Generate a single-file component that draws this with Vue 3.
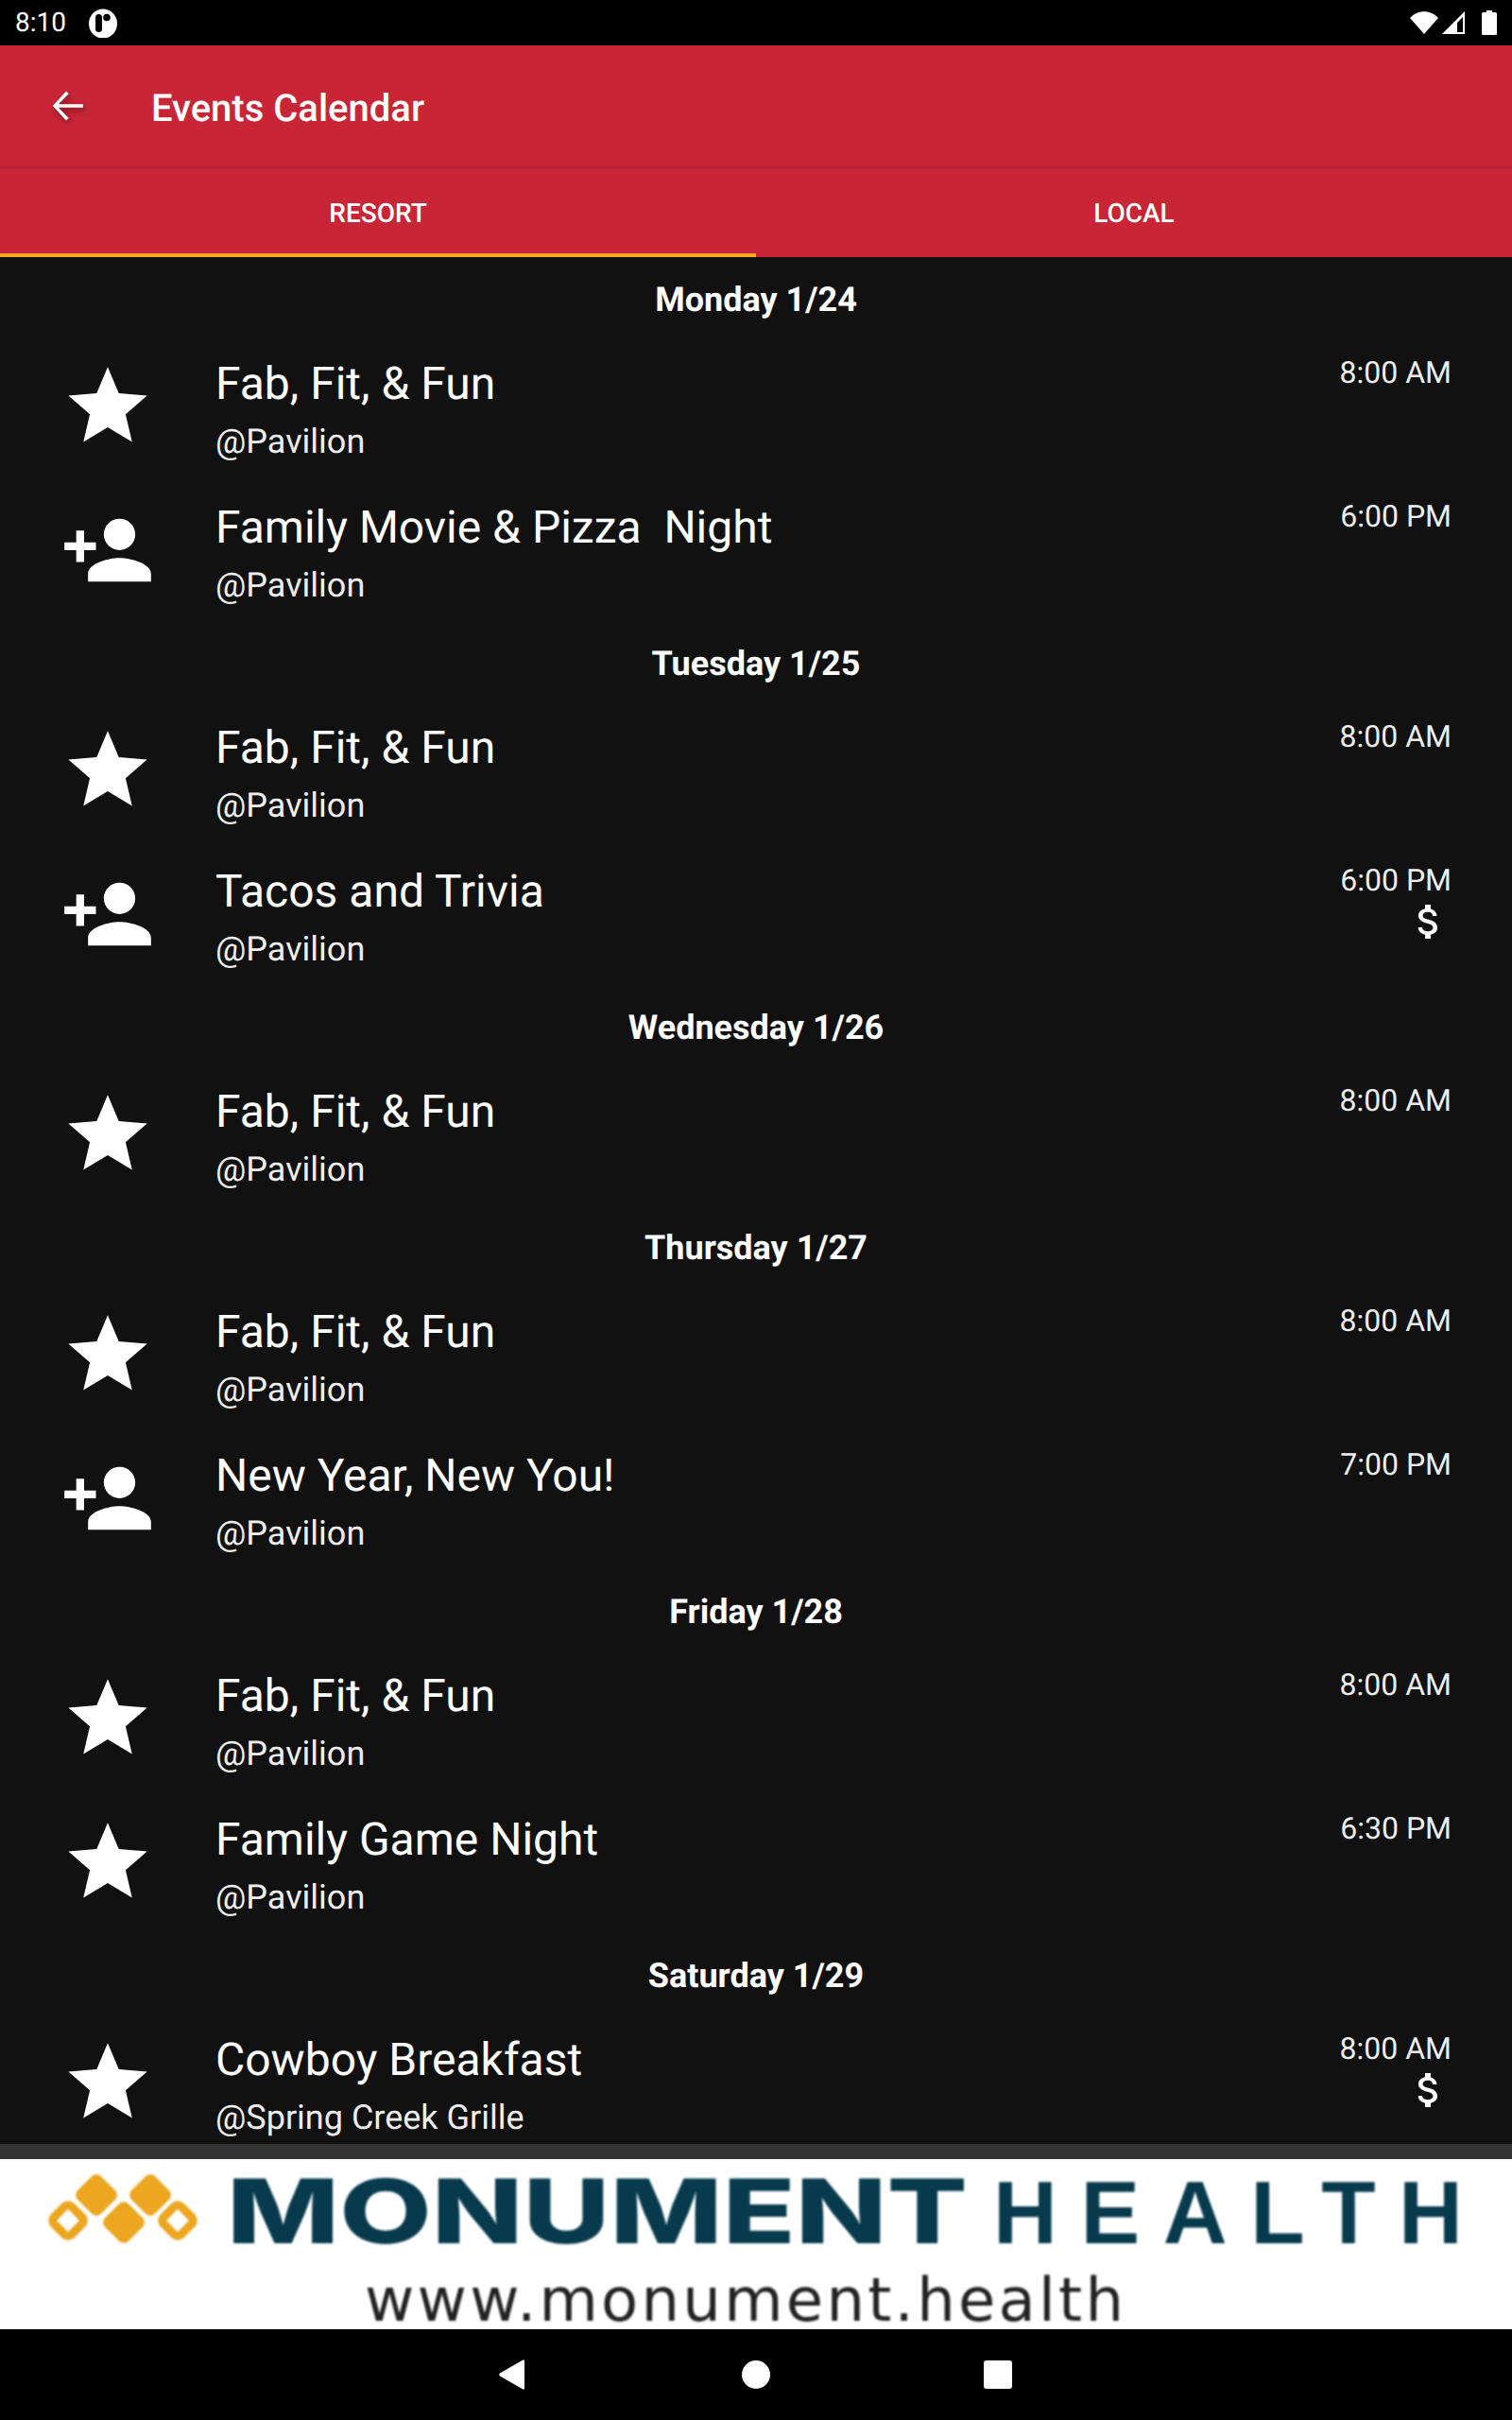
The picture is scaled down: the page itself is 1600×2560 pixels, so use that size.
<script setup>
const days = [
  { label: 'Monday 1/24', events: [
    { icon: 'star', title: 'Fab, Fit, & Fun', place: '@Pavilion', time: '8:00 AM' },
    { icon: 'add', title: 'Family Movie & Pizza  Night', place: '@Pavilion', time: '6:00 PM' }
  ]},
  { label: 'Tuesday 1/25', events: [
    { icon: 'star', title: 'Fab, Fit, & Fun', place: '@Pavilion', time: '8:00 AM' },
    { icon: 'add', title: 'Tacos and Trivia', place: '@Pavilion', time: '6:00 PM', paid: true }
  ]},
  { label: 'Wednesday 1/26', events: [
    { icon: 'star', title: 'Fab, Fit, & Fun', place: '@Pavilion', time: '8:00 AM' }
  ]},
  { label: 'Thursday 1/27', events: [
    { icon: 'star', title: 'Fab, Fit, & Fun', place: '@Pavilion', time: '8:00 AM' },
    { icon: 'add', title: 'New Year, New You!', place: '@Pavilion', time: '7:00 PM' }
  ]},
  { label: 'Friday 1/28', events: [
    { icon: 'star', title: 'Fab, Fit, & Fun', place: '@Pavilion', time: '8:00 AM' },
    { icon: 'star', title: 'Family Game Night', place: '@Pavilion', time: '6:30 PM' }
  ]},
  { label: 'Saturday 1/29', events: [
    { icon: 'star', title: 'Cowboy Breakfast', place: '@Spring Creek Grille', time: '8:00 AM', paid: true }
  ]}
]
</script>

<template>
  <div class="screen">
    <div class="status">
      <div class="status-left">
        <span class="clock">8:10</span>
        <svg class="note" width="32" height="32" viewBox="0 0 32 32">
          <ellipse cx="16" cy="17" rx="15" ry="15.5" fill="#fff"/>
          <rect x="8" y="7" width="7" height="19" rx="3.5" fill="#000"/>
          <circle cx="20" cy="10.5" r="3.8" fill="#000"/>
        </svg>
      </div>
      <div class="status-right">
        <svg width="30" height="26" viewBox="0 0 30 26"><path d="M15 25 L0 8 C8 -1 22 -1 30 8 Z" fill="#fff"/></svg>
        <svg width="26" height="26" viewBox="0 0 26 26"><path d="M1 25 L25 1 V25 Z" fill="#fff"/><path d="M17 13 L23 7 V23 H17 Z" fill="#000"/></svg>
        <svg width="16" height="26" viewBox="0 0 16 26"><path d="M5 0 H11 V2 H14.5 Q16 2 16 3.5 V24.5 Q16 26 14.5 26 H1.5 Q0 26 0 24.5 V3.5 Q0 2 1.5 2 H5 Z" fill="#fff"/></svg>
      </div>
    </div>

    <header class="toolbar">
      <svg class="back" width="48" height="48" viewBox="0 0 24 24"><path d="M20 11.1H6.9l5.4-5.5L11 4.3 3.9 12l7.1 7.7 1.3-1.3-5.4-5.5H20z" fill="#fff"/></svg>
      <h1 class="toolbar-title">Events Calendar</h1>
    </header>

    <nav class="tabs">
      <div class="tab active">RESORT</div>
      <div class="tab">LOCAL</div>
    </nav>

    <main class="list">
      <section v-for="day in days" :key="day.label">
        <h2 class="day">{{ day.label }}</h2>
        <div v-for="(ev, i) in day.events" :key="i" class="row">
          <div class="row-icon">
            <svg v-if="ev.icon === 'star'" width="100" height="100" viewBox="0 0 24 24"><path d="M12 17.27L18.18 21l-1.64-7.03L22 9.24l-7.19-.61L12 2 9.19 8.63 2 9.24l5.46 4.73L5.82 21z" fill="#fff"/></svg>
            <svg v-else width="100" height="100" viewBox="0 0 24 24"><path d="M15 12c2.21 0 4-1.79 4-4s-1.79-4-4-4-4 1.79-4 4 1.79 4 4 4zm-9-2V7H4v3H1v2h3v3h2v-3h3v-2H6zm9 4c-2.67 0-8 1.34-8 4v2h16v-2c0-2.66-5.33-4-8-4z" fill="#fff"/></svg>
          </div>
          <div class="row-text">
            <div class="title">{{ ev.title }}</div>
            <div class="place">{{ ev.place }}</div>
          </div>
          <div class="row-meta">
            <div class="time">{{ ev.time }}</div>
            <svg v-if="ev.paid" class="money" width="48" height="48" viewBox="0 0 24 24"><path d="M11.8 10.9c-2.27-.59-3-1.2-3-2.15 0-1.09 1.01-1.85 2.7-1.85 1.78 0 2.44.85 2.5 2.1h2.21c-.07-1.72-1.12-3.3-3.21-3.81V3h-3v2.16c-1.94.42-3.5 1.68-3.5 3.61 0 2.31 1.91 3.46 4.7 4.13 2.5.6 3 1.48 3 2.41 0 .69-.49 1.79-2.7 1.79-2.06 0-2.87-.92-2.98-2.1h-2.2c.12 2.19 1.76 3.42 3.68 3.83V21h3v-2.15c1.95-.37 3.5-1.5 3.5-3.55 0-2.84-2.43-3.81-4.7-4.4z" fill="#fff"/></svg>
          </div>
        </div>
      </section>
    </main>

    <div class="ad-gap"></div>
    <div class="ad">
      <svg class="ad-art" width="1600" height="180" viewBox="0 0 1600 180">
        <g fill="#eca620">
          <rect x="84.5" y="20.5" width="35" height="35" rx="7" transform="rotate(45 102 38)"/>
          <rect x="141.5" y="20.5" width="35" height="35" rx="7" transform="rotate(45 159 38)"/>
          <rect x="113.5" y="49.5" width="35" height="35" rx="7" transform="rotate(45 131 67)"/>
        </g>
        <g fill="none" stroke="#eca620" stroke-width="9">
          <rect x="59" y="52" width="26" height="26" rx="5" transform="rotate(45 72 65)"/>
          <rect x="175" y="52" width="26" height="26" rx="5" transform="rotate(45 188 65)"/>
        </g>
        <text class="ad-brand" x="240" y="89" textLength="784" lengthAdjust="spacingAndGlyphs">MONUMENT</text>
        <text class="ad-health" x="1051" y="89" textLength="497" lengthAdjust="spacing">HEALTH</text>
        <text class="ad-url" x="386" y="171" textLength="803" lengthAdjust="spacing">www.monument.health</text>
      </svg>
    </div>

    <footer class="navbar">
      <svg class="nav-back" width="27" height="32" viewBox="0 0 27 32"><path d="M27 2 V30 Q27 33 24.5 31 L1 17.5 Q-0.5 16 1 14.5 L24.5 1 Q27 -1 27 2 Z" fill="#fff"/></svg>
      <svg class="nav-home" width="30" height="30" viewBox="0 0 30 30"><circle cx="15" cy="15" r="15" fill="#fff"/></svg>
      <svg class="nav-recent" width="30" height="30" viewBox="0 0 30 30"><rect width="30" height="30" rx="3" fill="#fff"/></svg>
    </footer>
  </div>
</template>

<style>
html, body { background: #000; }
</style>

<style scoped>
.screen {
  width: 1600px;
  height: 2560px;
  display: flex;
  flex-direction: column;
  font-family: Roboto, "Liberation Sans", sans-serif;
  color: #fff;
  background: #111;
  text-rendering: geometricPrecision;
}
.status {
  height: 48px;
  flex: none;
  background: #000;
  display: flex;
  justify-content: space-between;
  align-items: center;
  padding: 0 16px;
}
.status-left { display: flex; align-items: center; gap: 23px; }
.clock { font-size: 28px; line-height: 48px; }
.status-right { display: flex; align-items: center; gap: 3px; }
.status-right svg:last-child { margin-left: 14px; }
.toolbar {
  height: 128px;
  flex: none;
  background: #c82637;
  display: flex;
  align-items: center;
  padding-left: 48px;
  box-sizing: border-box;
}
.back { filter: drop-shadow(2px 3px 3px rgba(0, 0, 0, 0.45)); margin-right: 64px; }
.toolbar-title { margin: 6px 0 0; font-size: 40px; font-weight: 500; line-height: 48px; }
.tabs {
  height: 96px;
  flex: none;
  background: #c82637;
  display: flex;
  box-shadow: inset 0 4px 4px -3px rgba(0, 0, 0, 0.2);
}
.tab {
  flex: 1;
  box-sizing: border-box;
  text-align: center;
  font-size: 28px;
  font-weight: 500;
  line-height: 100px;
}
.tab.active { border-bottom: 4px solid #f9a825; }
.list {
  flex: 1;
  min-height: 0;
  overflow: hidden;
  background: #111;
  padding-top: 4px;
}
.day {
  margin: 0;
  height: 81px;
  text-align: center;
  font-size: 36px;
  font-weight: 700;
  line-height: 83px;
}
.row { height: 152px; display: flex; }
.row-icon { width: 100px; height: 100px; margin: 23px 0 0 64px; flex: none; }
.row-text { margin-left: 64px; flex: 1; padding-top: 21px; }
.title { font-size: 48px; line-height: 56px; white-space: pre; }
.place { font-size: 36px; line-height: 44px; margin-top: 11px; color: #eee; }
.row-meta {
  width: 200px;
  margin-right: 64px;
  padding-top: 18px;
  display: flex;
  flex-direction: column;
  align-items: flex-end;
}
.time { font-size: 32px; line-height: 38px; color: #eee; }
.money { margin-top: 1px; }
.ad-gap { height: 16px; flex: none; background: #333; }
.ad { height: 180px; flex: none; background: #fff; position: relative; }
.ad-art { display: block; overflow: visible; filter: blur(0.9px); }
.ad-brand { font-family: Inter, "Liberation Sans", sans-serif; font-size: 94px; font-weight: 800; fill: #063a4c; }
.ad-health { font-family: "Liberation Sans", sans-serif; font-size: 94px; font-weight: 700; fill: #063a4c; }
.ad-url { font-family: "DejaVu Sans", sans-serif; font-size: 64px; fill: #222; }
.navbar {
  height: 96px;
  flex: none;
  background: #000;
  display: flex;
  align-items: center;
  padding-left: 528px;
  position: relative;
}
.nav-home { margin-left: 230px; }
.nav-recent { margin-left: 226px; }
</style>
